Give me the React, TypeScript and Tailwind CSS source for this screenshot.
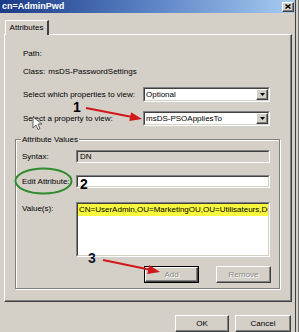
import React from 'react';

const raised =
  'border border-t-white border-l-white border-b-[#404040] border-r-[#404040] shadow-[inset_-1px_-1px_0_#808080]';

const Select: React.FC<{ value: string }> = ({ value }) => (
  <div className="w-[127px] h-[15px] border border-t-[#808080] border-l-[#808080] border-b-white border-r-white">
    <div className="h-full flex items-center bg-white border border-t-[#404040] border-l-[#404040] border-b-[#d4d0c8] border-r-[#d4d0c8]">
      <span className="pl-[1px] leading-none whitespace-nowrap">{value}</span>
      <div className={`ml-auto h-full w-[12px] bg-[#d4d0c8] flex items-center justify-center ${raised}`}>
        <svg width="5" height="3" viewBox="0 0 5 3">
          <path d="M0 0h5L2.5 3z" fill="#000" />
        </svg>
      </div>
    </div>
  </div>
);

const Field: React.FC<{ h: string; bg: string; children?: React.ReactNode }> = ({ h, bg, children }) => (
  <div className={`w-[194px] ${h} border border-t-[#808080] border-l-[#808080] border-b-white border-r-white`}>
    <div className={`h-full ${bg} border border-t-[#404040] border-l-[#404040] border-b-[#d4d0c8] border-r-[#d4d0c8] overflow-hidden`}>
      {children}
    </div>
  </div>
);

const App: React.FC = () => {
  return (
    <div className="relative w-[299px] h-[332px] overflow-hidden bg-[#d4d0c8] text-black text-[8px] font-['Liberation_Sans',Arial,sans-serif]">
      <div className="flex h-full">
        <div className="w-[296px] flex flex-col border-r border-[#404040]">
          {/* title bar */}
          <div className="h-[13px] flex items-center pl-[2px] pr-[1px] bg-gradient-to-r from-[#1c3a86] via-[#5a82c4] to-[#a8ccf0]">
            <span className="text-white font-bold text-[9px] leading-none">cn=AdminPwd</span>
            <div className={`ml-auto w-[12px] h-[10px] bg-[#d4d0c8] flex items-center justify-center ${raised}`}>
              <svg width="6" height="5" viewBox="0 0 6 5">
                <path d="M0.5 0.5l5 4M5.5 0.5l-5 4" stroke="#000" strokeWidth="1.4" />
              </svg>
            </div>
          </div>

          {/* tabs */}
          <div className="pt-[7px] pl-[5px] flex">
            <div className="relative z-10 w-[44px] h-[15px] -mb-[1px] bg-[#d4d0c8] flex items-center justify-center border-t border-l border-white border-r-2 border-r-[#404040]">
              <span className="leading-none">Attributes</span>
            </div>
          </div>

          {/* tab panel */}
          <div className="ml-[4px] w-[288px] h-[268px] border border-t-white border-l-white border-b-[#404040] border-r-[#404040] shadow-[inset_-1px_-1px_0_#808080]">
            <div className="pl-[18px]">
              <div className="mt-[13px] h-[12px] flex items-center leading-none">Path:</div>
              <div className="mt-[6px] h-[12px] flex items-center gap-[3px] leading-none">
                <span>Class:</span>
                <span>msDS-PasswordSettings</span>
              </div>
              <div className="mt-[9px] h-[15px] flex items-center">
                <span className="w-[120px] leading-none">Select which properties to view:</span>
                <Select value="Optional" />
              </div>
              <div className="mt-[9px] h-[15px] flex items-center">
                <span className="w-[120px] leading-none">Select a property to view:</span>
                <Select value="msDS-PSOAppliesTo" />
              </div>
            </div>

            {/* group box */}
            <div className="relative mt-[13px] ml-[10px] w-[265px] h-[150px] border border-[#808080] shadow-[inset_1px_1px_0_white,1px_1px_0_white]">
              <span className="absolute -top-[6px] left-[5px] px-[1px] bg-[#d4d0c8] leading-[12px]">Attribute Values</span>
              <div className="pl-[6px]">
                <div className="mt-[10px] h-[13px] flex items-center">
                  <span className="w-[54px] leading-none">Syntax:</span>
                  <Field h="h-[13px]" bg="bg-[#d4d0c8]">
                    <div className="h-full flex items-center pl-[2px] leading-none">DN</div>
                  </Field>
                </div>
                <div className="mt-[12px] h-[13px] flex items-center">
                  <span className="w-[54px] leading-none">Edit Attribute:</span>
                  <Field h="h-[13px]" bg="bg-white" />
                </div>
                <div className="mt-[14px] h-[55px] flex">
                  <span className="w-[54px] pt-[3px] leading-none">Value(s):</span>
                  <Field h="h-[55px]" bg="bg-white">
                    <div className="h-[12px] bg-[#f8f83c] flex items-center pl-[1px] whitespace-nowrap leading-none">
                      CN=UserAdmin,OU=MarketingOU,OU=Utilisateurs,DC=Chezmoi,DC=local
                    </div>
                  </Field>
                </div>
                <div className="mt-[9px] h-[17px] flex justify-end gap-[17px] pr-[8px]">
                  <div className="w-[55px] h-full border border-black">
                    <div className={`h-full flex items-center justify-center text-[#8a8a8a] [text-shadow:1px_1px_0_white] ${raised}`}>
                      Add
                    </div>
                  </div>
                  <div className={`w-[55px] h-full flex items-center justify-center text-[#8a8a8a] [text-shadow:1px_1px_0_white] ${raised}`}>
                    Remove
                  </div>
                </div>
              </div>
            </div>
          </div>

          {/* dialog buttons */}
          <div className="mt-[13px] flex justify-end gap-[6px] pr-[4px]">
            <div className={`w-[54px] h-[17px] flex items-center justify-center ${raised}`}>OK</div>
            <div className={`w-[56px] h-[17px] flex items-center justify-center ${raised}`}>Cancel</div>
          </div>
        </div>
        <div className="w-[3px] h-full bg-[#d4d0c8] border-r border-[#707070]" />
      </div>

      {/* annotations */}
      <svg className="absolute inset-0 pointer-events-none" width="299" height="332" viewBox="0 0 299 332">
        <ellipse cx="43.5" cy="181" rx="28" ry="12.5" fill="none" stroke="#2e8b2e" strokeWidth="2" />
        <line x1="86" y1="108" x2="131" y2="116.7" stroke="#d01818" strokeWidth="2" />
        <polygon points="142,119 129.3,121.1 131.1,112.3" fill="#d01818" />
        <line x1="103" y1="260" x2="149" y2="269.5" stroke="#d01818" strokeWidth="2" />
        <polygon points="160,272 147.3,273.9 149.2,265.1" fill="#d01818" />
        <polygon points="33,117 33,128 36,125 38,129.5 40,128.5 38,124 42,124" fill="#fff" stroke="#444" strokeWidth="0.8" />
      </svg>
      <span className="absolute left-[73px] top-[100px] text-[14px] font-bold leading-none">1</span>
      <span className="absolute left-[80px] top-[177px] text-[14px] font-bold leading-none">2</span>
      <span className="absolute left-[88px] top-[251px] text-[14px] font-bold leading-none text-[#101830]">3</span>
    </div>
  );
};

export default App;
